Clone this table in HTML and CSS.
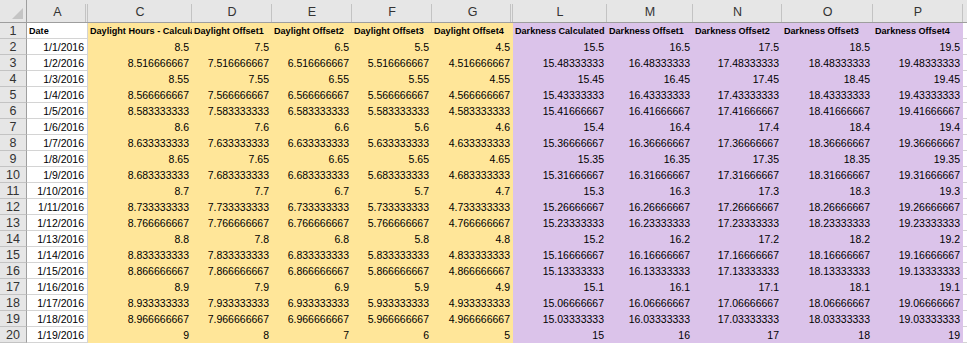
FILE: index.html
```html
<!DOCTYPE html>
<html lang="en">
  <head>
    <meta charset="UTF-8" />
    <meta name="viewport" content="width=device-width, initial-scale=1.0" />
    <title>Daylight Hours</title>
    <link rel="stylesheet" href="styles.css">
  </head>
  <body>
    <div class="sheet">
      <!-- column letters -->
      <div class="col-head corner"><span class="corner-mark"></span></div>
      <div class="col-head hidden-after">A</div>
      <div class="col-head">C</div>
      <div class="col-head">D</div>
      <div class="col-head">E</div>
      <div class="col-head">F</div>
      <div class="col-head hidden-after">G</div>
      <div class="col-head">L</div>
      <div class="col-head">M</div>
      <div class="col-head">N</div>
      <div class="col-head">O</div>
      <div class="col-head">P</div>
      <div class="col-head"></div>

      <!-- row 1: titles -->
      <div class="row-head">1</div>
      <div class="cell date title">Date</div>
      <div class="cell day title">Daylight Hours - Calculated</div>
      <div class="cell day title">Daylight Offset1</div>
      <div class="cell day title">Daylight Offset2</div>
      <div class="cell day title">Daylight Offset3</div>
      <div class="cell day title">Daylight Offset4</div>
      <div class="cell dark title">Darkness Calculated</div>
      <div class="cell dark title">Darkness Offset1</div>
      <div class="cell dark title">Darkness Offset2</div>
      <div class="cell dark title">Darkness Offset3</div>
      <div class="cell dark title">Darkness Offset4</div>
      <div class="cell blank"></div>

      <div class="row-head">2</div>
      <div class="cell date">1/1/2016</div>
      <div class="cell day">8.5</div><div class="cell day">7.5</div><div class="cell day">6.5</div><div class="cell day">5.5</div><div class="cell day">4.5</div>
      <div class="cell dark">15.5</div><div class="cell dark">16.5</div><div class="cell dark">17.5</div><div class="cell dark">18.5</div><div class="cell dark">19.5</div>
      <div class="cell blank"></div>

      <div class="row-head">3</div>
      <div class="cell date">1/2/2016</div>
      <div class="cell day">8.516666667</div><div class="cell day">7.516666667</div><div class="cell day">6.516666667</div><div class="cell day">5.516666667</div><div class="cell day">4.516666667</div>
      <div class="cell dark">15.48333333</div><div class="cell dark">16.48333333</div><div class="cell dark">17.48333333</div><div class="cell dark">18.48333333</div><div class="cell dark">19.48333333</div>
      <div class="cell blank"></div>

      <div class="row-head">4</div>
      <div class="cell date">1/3/2016</div>
      <div class="cell day">8.55</div><div class="cell day">7.55</div><div class="cell day">6.55</div><div class="cell day">5.55</div><div class="cell day">4.55</div>
      <div class="cell dark">15.45</div><div class="cell dark">16.45</div><div class="cell dark">17.45</div><div class="cell dark">18.45</div><div class="cell dark">19.45</div>
      <div class="cell blank"></div>

      <div class="row-head">5</div>
      <div class="cell date">1/4/2016</div>
      <div class="cell day">8.566666667</div><div class="cell day">7.566666667</div><div class="cell day">6.566666667</div><div class="cell day">5.566666667</div><div class="cell day">4.566666667</div>
      <div class="cell dark">15.43333333</div><div class="cell dark">16.43333333</div><div class="cell dark">17.43333333</div><div class="cell dark">18.43333333</div><div class="cell dark">19.43333333</div>
      <div class="cell blank"></div>

      <div class="row-head">6</div>
      <div class="cell date">1/5/2016</div>
      <div class="cell day">8.583333333</div><div class="cell day">7.583333333</div><div class="cell day">6.583333333</div><div class="cell day">5.583333333</div><div class="cell day">4.583333333</div>
      <div class="cell dark">15.41666667</div><div class="cell dark">16.41666667</div><div class="cell dark">17.41666667</div><div class="cell dark">18.41666667</div><div class="cell dark">19.41666667</div>
      <div class="cell blank"></div>

      <div class="row-head">7</div>
      <div class="cell date">1/6/2016</div>
      <div class="cell day">8.6</div><div class="cell day">7.6</div><div class="cell day">6.6</div><div class="cell day">5.6</div><div class="cell day">4.6</div>
      <div class="cell dark">15.4</div><div class="cell dark">16.4</div><div class="cell dark">17.4</div><div class="cell dark">18.4</div><div class="cell dark">19.4</div>
      <div class="cell blank"></div>

      <div class="row-head">8</div>
      <div class="cell date">1/7/2016</div>
      <div class="cell day">8.633333333</div><div class="cell day">7.633333333</div><div class="cell day">6.633333333</div><div class="cell day">5.633333333</div><div class="cell day">4.633333333</div>
      <div class="cell dark">15.36666667</div><div class="cell dark">16.36666667</div><div class="cell dark">17.36666667</div><div class="cell dark">18.36666667</div><div class="cell dark">19.36666667</div>
      <div class="cell blank"></div>

      <div class="row-head">9</div>
      <div class="cell date">1/8/2016</div>
      <div class="cell day">8.65</div><div class="cell day">7.65</div><div class="cell day">6.65</div><div class="cell day">5.65</div><div class="cell day">4.65</div>
      <div class="cell dark">15.35</div><div class="cell dark">16.35</div><div class="cell dark">17.35</div><div class="cell dark">18.35</div><div class="cell dark">19.35</div>
      <div class="cell blank"></div>

      <div class="row-head">10</div>
      <div class="cell date">1/9/2016</div>
      <div class="cell day">8.683333333</div><div class="cell day">7.683333333</div><div class="cell day">6.683333333</div><div class="cell day">5.683333333</div><div class="cell day">4.683333333</div>
      <div class="cell dark">15.31666667</div><div class="cell dark">16.31666667</div><div class="cell dark">17.31666667</div><div class="cell dark">18.31666667</div><div class="cell dark">19.31666667</div>
      <div class="cell blank"></div>

      <div class="row-head">11</div>
      <div class="cell date">1/10/2016</div>
      <div class="cell day">8.7</div><div class="cell day">7.7</div><div class="cell day">6.7</div><div class="cell day">5.7</div><div class="cell day">4.7</div>
      <div class="cell dark">15.3</div><div class="cell dark">16.3</div><div class="cell dark">17.3</div><div class="cell dark">18.3</div><div class="cell dark">19.3</div>
      <div class="cell blank"></div>

      <div class="row-head">12</div>
      <div class="cell date">1/11/2016</div>
      <div class="cell day">8.733333333</div><div class="cell day">7.733333333</div><div class="cell day">6.733333333</div><div class="cell day">5.733333333</div><div class="cell day">4.733333333</div>
      <div class="cell dark">15.26666667</div><div class="cell dark">16.26666667</div><div class="cell dark">17.26666667</div><div class="cell dark">18.26666667</div><div class="cell dark">19.26666667</div>
      <div class="cell blank"></div>

      <div class="row-head">13</div>
      <div class="cell date">1/12/2016</div>
      <div class="cell day">8.766666667</div><div class="cell day">7.766666667</div><div class="cell day">6.766666667</div><div class="cell day">5.766666667</div><div class="cell day">4.766666667</div>
      <div class="cell dark">15.23333333</div><div class="cell dark">16.23333333</div><div class="cell dark">17.23333333</div><div class="cell dark">18.23333333</div><div class="cell dark">19.23333333</div>
      <div class="cell blank"></div>

      <div class="row-head">14</div>
      <div class="cell date">1/13/2016</div>
      <div class="cell day">8.8</div><div class="cell day">7.8</div><div class="cell day">6.8</div><div class="cell day">5.8</div><div class="cell day">4.8</div>
      <div class="cell dark">15.2</div><div class="cell dark">16.2</div><div class="cell dark">17.2</div><div class="cell dark">18.2</div><div class="cell dark">19.2</div>
      <div class="cell blank"></div>

      <div class="row-head">15</div>
      <div class="cell date">1/14/2016</div>
      <div class="cell day">8.833333333</div><div class="cell day">7.833333333</div><div class="cell day">6.833333333</div><div class="cell day">5.833333333</div><div class="cell day">4.833333333</div>
      <div class="cell dark">15.16666667</div><div class="cell dark">16.16666667</div><div class="cell dark">17.16666667</div><div class="cell dark">18.16666667</div><div class="cell dark">19.16666667</div>
      <div class="cell blank"></div>

      <div class="row-head">16</div>
      <div class="cell date">1/15/2016</div>
      <div class="cell day">8.866666667</div><div class="cell day">7.866666667</div><div class="cell day">6.866666667</div><div class="cell day">5.866666667</div><div class="cell day">4.866666667</div>
      <div class="cell dark">15.13333333</div><div class="cell dark">16.13333333</div><div class="cell dark">17.13333333</div><div class="cell dark">18.13333333</div><div class="cell dark">19.13333333</div>
      <div class="cell blank"></div>

      <div class="row-head">17</div>
      <div class="cell date">1/16/2016</div>
      <div class="cell day">8.9</div><div class="cell day">7.9</div><div class="cell day">6.9</div><div class="cell day">5.9</div><div class="cell day">4.9</div>
      <div class="cell dark">15.1</div><div class="cell dark">16.1</div><div class="cell dark">17.1</div><div class="cell dark">18.1</div><div class="cell dark">19.1</div>
      <div class="cell blank"></div>

      <div class="row-head">18</div>
      <div class="cell date">1/17/2016</div>
      <div class="cell day">8.933333333</div><div class="cell day">7.933333333</div><div class="cell day">6.933333333</div><div class="cell day">5.933333333</div><div class="cell day">4.933333333</div>
      <div class="cell dark">15.06666667</div><div class="cell dark">16.06666667</div><div class="cell dark">17.06666667</div><div class="cell dark">18.06666667</div><div class="cell dark">19.06666667</div>
      <div class="cell blank"></div>

      <div class="row-head">19</div>
      <div class="cell date">1/18/2016</div>
      <div class="cell day">8.966666667</div><div class="cell day">7.966666667</div><div class="cell day">6.966666667</div><div class="cell day">5.966666667</div><div class="cell day">4.966666667</div>
      <div class="cell dark">15.03333333</div><div class="cell dark">16.03333333</div><div class="cell dark">17.03333333</div><div class="cell dark">18.03333333</div><div class="cell dark">19.03333333</div>
      <div class="cell blank"></div>

      <div class="row-head">20</div>
      <div class="cell date">1/19/2016</div>
      <div class="cell day">9</div><div class="cell day">8</div><div class="cell day">7</div><div class="cell day">6</div><div class="cell day">5</div>
      <div class="cell dark">15</div><div class="cell dark">16</div><div class="cell dark">17</div><div class="cell dark">18</div><div class="cell dark">19</div>
      <div class="cell blank"></div>
    </div>
  </body>
</html>
```

FILE: styles.css
```css
:root {
  --header: #e6e6e6;
  --header-line: #c3c3c3;
  --header-edge: #9e9e9e;
  --grid: #d4d4d4;
  --daylight: #ffe699;
  --darkness: #dbc3ea;
  --text: #000;
}

html,
body {
  margin: 0;
  padding: 0;
  background: #fff;
  overflow: hidden;
}

.sheet {
  display: grid;
  grid-template-columns: 27px 61px 104px 80px 80px 80px 81px 94px 86px 89px 91px 90px 40px;
  grid-template-rows: 23px repeat(20, 16px);
  font-family: "Liberation Sans", Arial, sans-serif;
  color: var(--text);
}

.sheet > div {
  box-sizing: border-box;
  overflow: hidden;
  white-space: nowrap;
}

.col-head {
  position: relative;
  background: var(--header) linear-gradient(var(--header-line), var(--header-line)) no-repeat right bottom / 1px 18px;
  border-bottom: 1px solid var(--header-edge);
  font-size: 12.5px;
  line-height: 24px;
  text-align: center;
  color: #333;
}

.col-head.hidden-after {
  background: var(--header) linear-gradient(to right, var(--header-line) 1px, transparent 1px, transparent 2px, var(--header-line) 2px) no-repeat right bottom / 3px 18px;
}

.corner {
  border-right: 1px solid var(--header-edge);
  background: var(--header);
}

.corner-mark {
  position: absolute;
  right: 3px;
  bottom: 3px;
  width: 11px;
  height: 11px;
  background: #c4c4c4;
  clip-path: polygon(100% 0, 100% 100%, 0 100%);
}

.row-head {
  background: var(--header);
  border-right: 1px solid var(--header-edge);
  border-bottom: 1px solid var(--header-line);
  font-size: 12.5px;
  line-height: 16px;
  text-align: center;
  color: #333;
}

.cell {
  font-size: 10.5px;
  line-height: 17px;
  text-align: right;
  padding-right: 3px;
}

.cell.title {
  font-size: 9.1px;
  font-weight: bold;
  text-align: left;
  padding-left: 2px;
  padding-right: 0;
}

.date {
  border-right: 1px solid var(--grid);
  border-bottom: 1px solid var(--grid);
}

.day {
  background: var(--daylight);
}

.dark {
  background: var(--darkness);
}

.blank {
  border-bottom: 1px solid var(--grid);
}
```
